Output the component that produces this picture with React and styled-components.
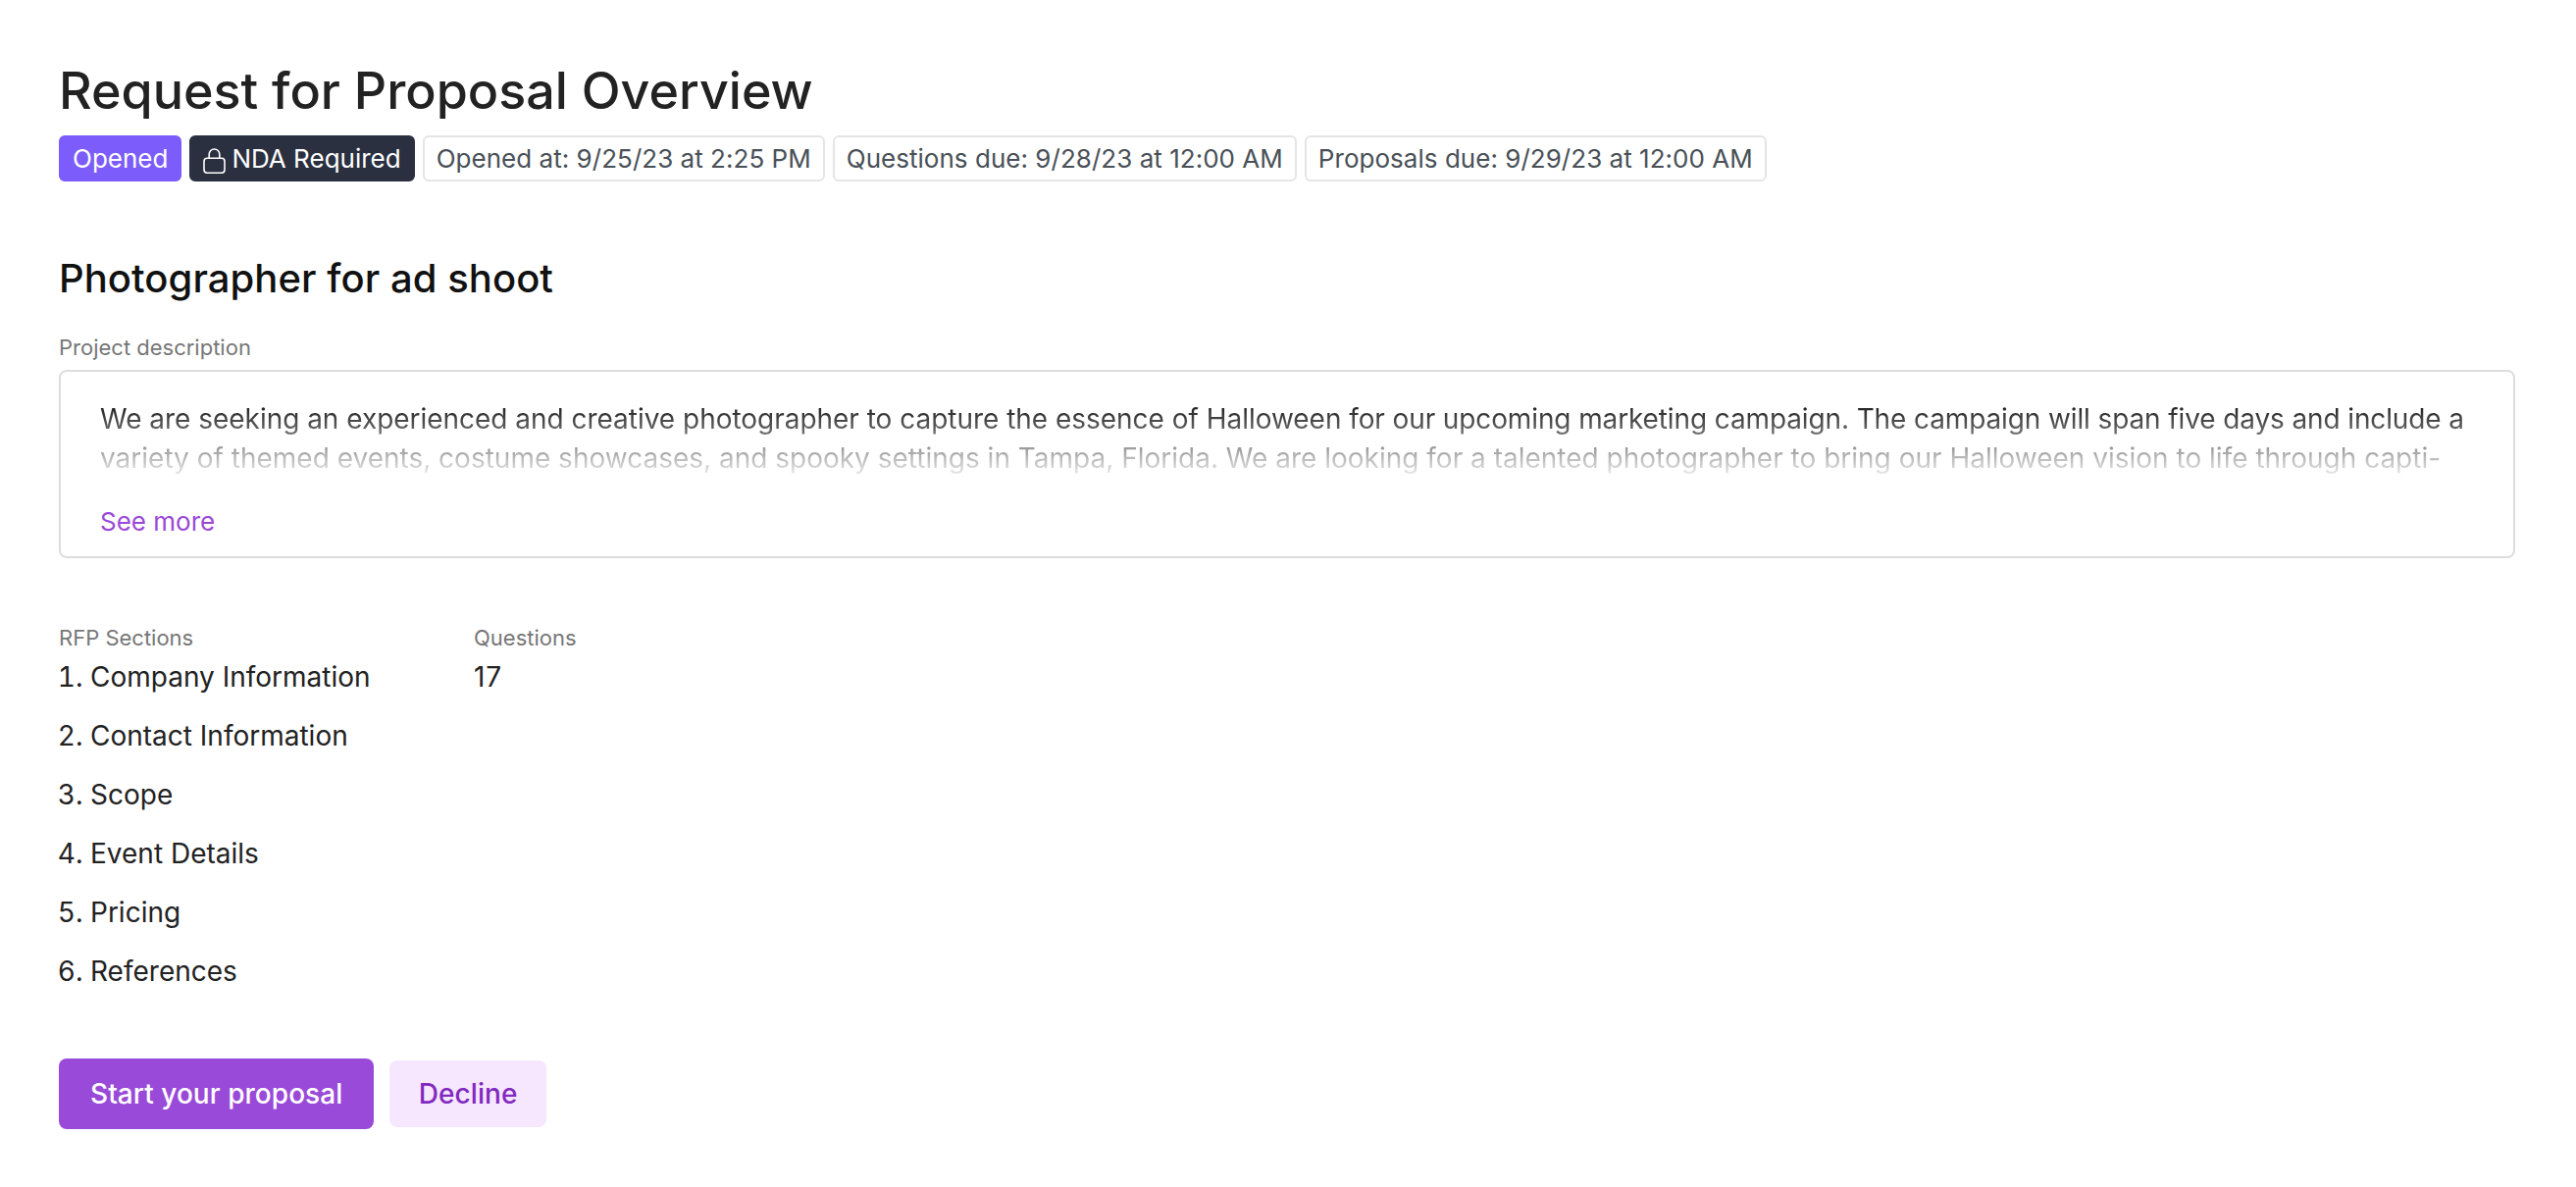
import React from 'react';
import styled, { createGlobalStyle, css } from 'styled-components';

const GlobalStyle = createGlobalStyle`
  * {
    box-sizing: border-box;
  }

  body {
    margin: 0;
    background: #fff;
    color: #222;
    font-family: Inter, 'Liberation Sans', sans-serif;
    font-size: 28px;
    line-height: 40px;
    -webkit-font-smoothing: antialiased;
  }
`;

const Page = styled.main`
  padding: 61px 62px 58px 60px;
`;

const Title = styled.h1`
  margin: 0;
  font-size: 52px;
  font-weight: 500;
  line-height: 64px;
`;

const Tags = styled.div`
  display: flex;
  gap: 8px;
  margin-top: 13px;
`;

const tagColors = {
  primary: css`
    background: #7c5cfa;
    border-color: #7c5cfa;
    color: #fff;
  `,
  dark: css`
    background: #2b3040;
    border-color: #2b3040;
    color: #fff;
  `,
  outline: css`
    background: #fff;
    border-color: #e5e5e5;
    color: #495057;
    letter-spacing: 0.03px;
  `,
};

const Tag = styled.span`
  display: flex;
  align-items: center;
  height: 47px;
  padding: 0 12px;
  border: 2px solid;
  border-radius: 6px;
  font-size: 26px;
  white-space: nowrap;
  ${(props) => tagColors[props.$variant]};
`;

const LockIcon = styled.svg`
  width: 24px;
  height: 28px;
  margin-right: 5px;
  margin-top: 3px;
`;

const ProjectName = styled.h2`
  margin: 75px 0 0;
  color: #111;
  font-size: 40px;
  font-weight: 500;
  letter-spacing: 0.06px;
  line-height: 48px;
`;

const Label = styled.div`
  color: #777;
  font-size: 22px;
  line-height: 32px;
`;

const DescriptionLabel = styled(Label)`
  margin-top: 30px;
`;

const Card = styled.section`
  height: 192px;
  margin-top: 7px;
  padding: 28px 30px 0 40px;
  border: 2px solid #ddd;
  border-radius: 8px;
`;

const Excerpt = styled.p`
  height: 80px;
  margin: 0;
  overflow: hidden;
  color: #0a0a0a;
  mask-image: linear-gradient(#000, transparent 105%);
`;

const Tracked = styled.span`
  letter-spacing: ${(props) => props.$spacing}px;
`;

const SeeMore = styled.button`
  display: block;
  margin: 25px 0 0;
  padding: 0;
  border: none;
  background: none;
  color: #9a48d8;
  font: inherit;
  font-size: 26px;
  line-height: 40px;
`;

const Details = styled.div`
  display: grid;
  grid-template-columns: 423px 1fr;
  margin-top: 65px;
`;

const SectionList = styled.ol`
  display: flex;
  flex-direction: column;
  gap: 20px;
  margin: 4px 0 0;
  padding-left: 32px;
`;

const QuestionCount = styled.div`
  margin-top: 4px;
  letter-spacing: 0.8px;
`;

const Actions = styled.div`
  display: flex;
  align-items: center;
  gap: 16px;
  margin-top: 69px;
`;

const Button = styled.button`
  height: ${(props) => (props.$primary ? '72px' : '68px')};
  padding: 0 ${(props) => (props.$primary ? '32px' : '29.5px')};
  border: none;
  border-radius: 8px;
  background: ${(props) => (props.$primary ? '#9a4ad8' : '#f6e7fe')};
  color: ${(props) => (props.$primary ? '#fff' : '#8229c0')};
  font: inherit;
  font-weight: 500;
  letter-spacing: 0.05px;
`;

const sections = [
  'Company Information',
  'Contact Information',
  'Scope',
  'Event Details',
  'Pricing',
  'References',
];

const dates = [
  'Opened at: 9/25/23 at 2:25 PM',
  'Questions due: 9/28/23 at 12:00 AM',
  'Proposals due: 9/29/23 at 12:00 AM',
];

function Lock() {
  return (
    <LockIcon viewBox="0 0 24 28" fill="none" stroke="currentColor" strokeWidth="1.6">
      <rect x="1" y="12.2" width="21" height="15" rx="3.2" />
      <path d="M6.2 12.2V8.3a5.3 5.3 0 0 1 10.6 0v3.9" />
    </LockIcon>
  );
}

export default function App() {
  return (
    <>
      <GlobalStyle />
      <Page>
        <Title>Request for Proposal Overview</Title>
        <Tags>
          <Tag $variant="primary">Opened</Tag>
          <Tag $variant="dark">
            <Lock />
            NDA Required
          </Tag>
          {dates.map((date) => (
            <Tag key={date} $variant="outline">{date}</Tag>
          ))}
        </Tags>

        <ProjectName>Photographer for ad shoot</ProjectName>
        <DescriptionLabel>Project description</DescriptionLabel>
        <Card>
          <Excerpt>
            <Tracked $spacing={-0.025}>
              We are seeking an experienced and creative photographer to capture the essence of
              Halloween{' '}
            </Tracked>
            <Tracked $spacing={-0.12}>
              for our upcoming marketing campaign. The campaign will span five days and include a
            </Tracked>
            <br />
            variety of themed events, costume showcases, and spooky settings in Tampa, Florida. We
            are looking for a talented photographer to bring our Halloween vision to life through
            capti-
          </Excerpt>
          <SeeMore>See more</SeeMore>
        </Card>

        <Details>
          <div>
            <Label>RFP Sections</Label>
            <SectionList>
              {sections.map((section) => (
                <li key={section}>{section}</li>
              ))}
            </SectionList>
          </div>
          <div>
            <Label>Questions</Label>
            <QuestionCount>17</QuestionCount>
          </div>
        </Details>

        <Actions>
          <Button $primary>Start your proposal</Button>
          <Button>Decline</Button>
        </Actions>
      </Page>
    </>
  );
}
